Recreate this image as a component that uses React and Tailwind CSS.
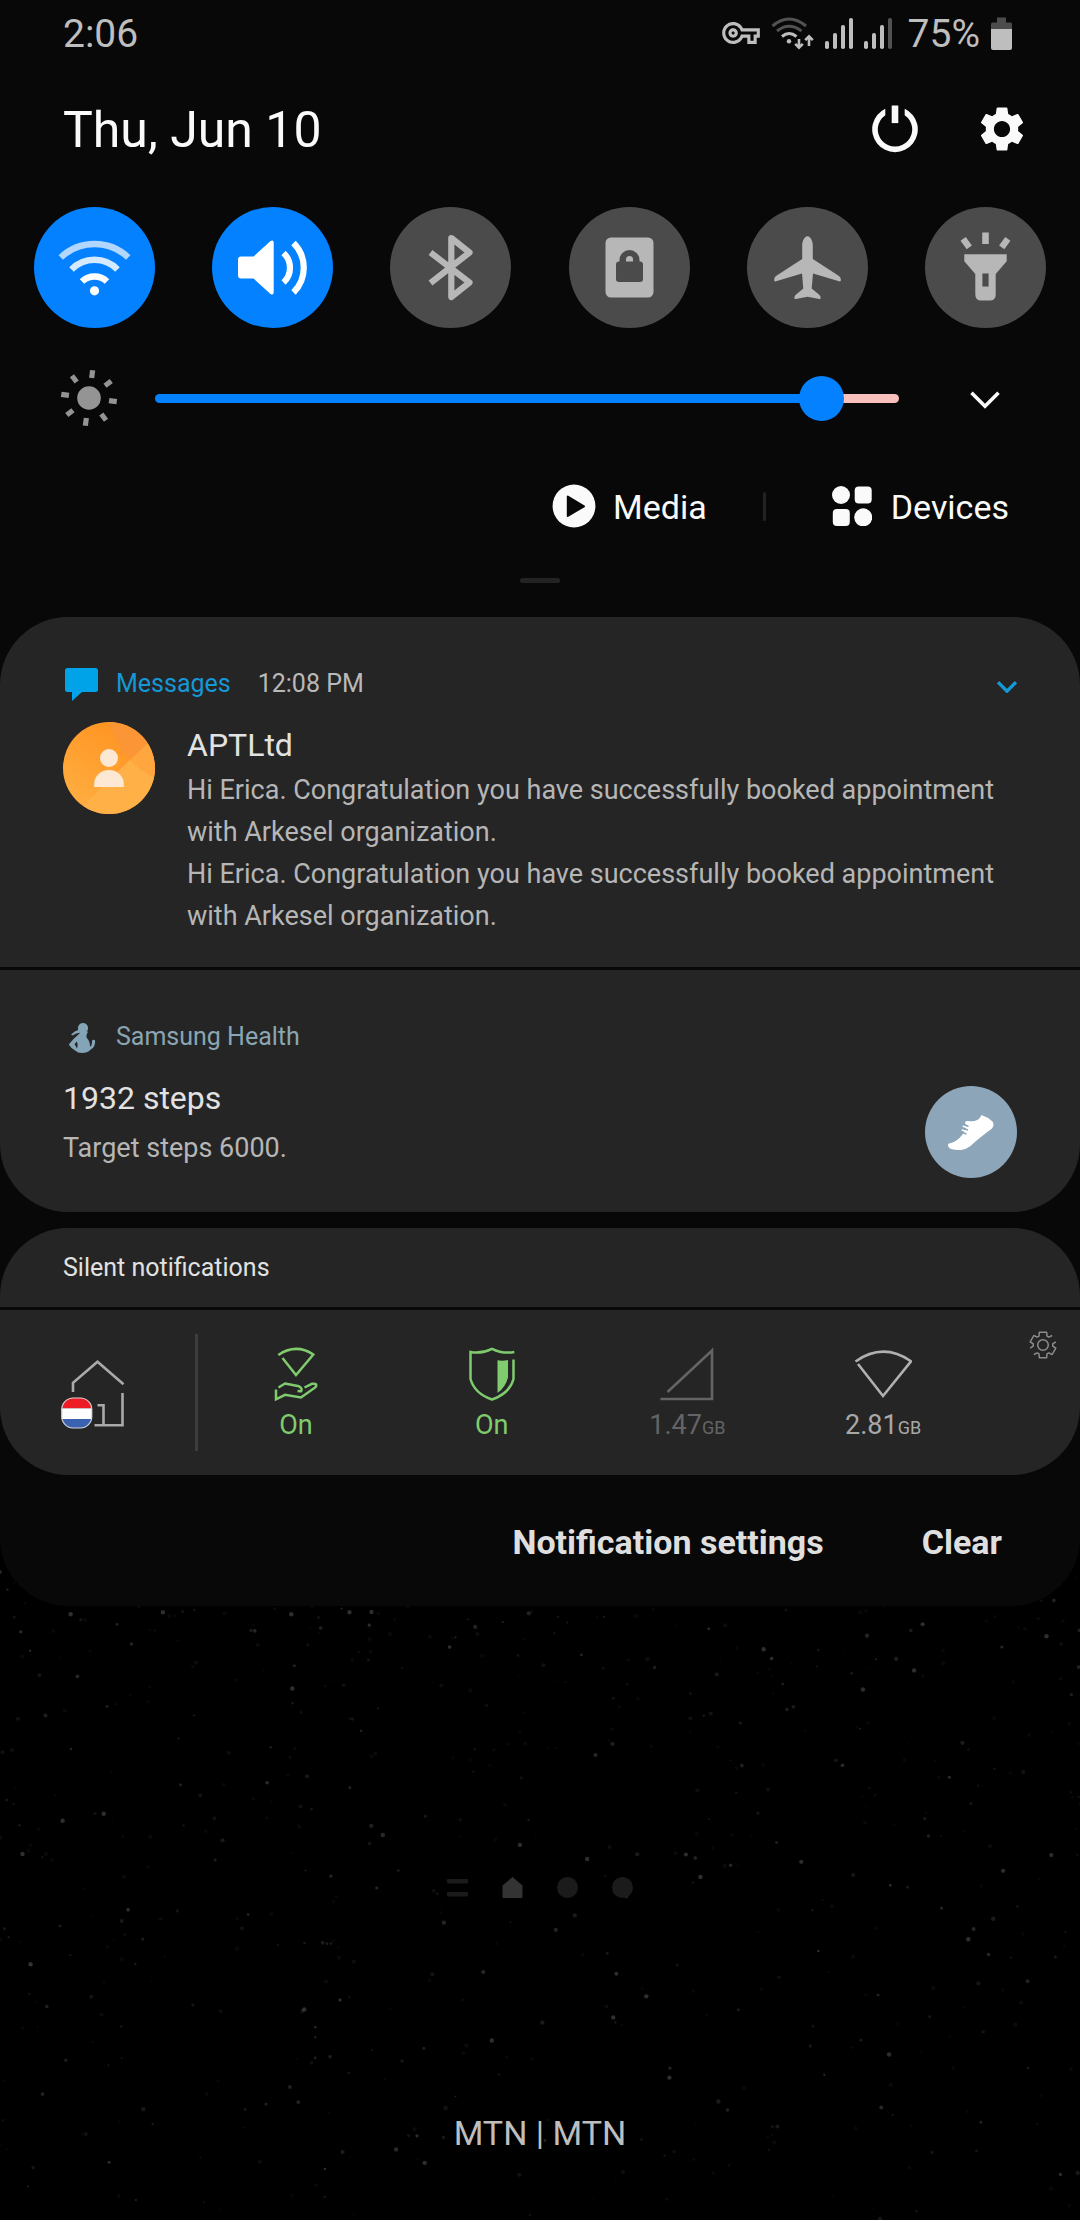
import React, { useState } from "react";
import { MdOutlineVpnKey, MdSettings } from "react-icons/md";

/* ---------- status bar icons ---------- */

function WifiStatusIcon() {
  return (
    <svg viewBox="770 13 44 34" className="h-[34px] w-[44px]" fill="none" stroke="#bebebe" strokeWidth="3">
      <path d="M771.5 23Q788 9 805 23" stroke="#525252" />
      <path d="M776 28Q788 18.5 800.5 28" stroke="#525252" />
      <path d="M781 33.5Q788 27.5 795.5 33.5" />
      <circle cx="788" cy="38.3" r="2.2" fill="#bebebe" stroke="none" />
      <path d="M798 36V44M794.2 40.8L798 44.6L801.8 40.8" strokeWidth="2.6" />
      <path d="M808 43V34M804.2 37.2L808 33.4L811.8 37.2" strokeWidth="2.6" />
    </svg>
  );
}

function SignalIcon({ level }) {
  const tops = [39, 31, 23, 16];
  return (
    <svg viewBox="0 15 28 32" className="h-[32px] w-[28px]">
      {tops.map((top, i) => (
        <rect key={top} x={i * 8} y={top} width="4" height={47 - top} rx="1.8" fill={i < level ? "#bebebe" : "#525252"} />
      ))}
    </svg>
  );
}

function BatteryIcon() {
  return (
    <svg viewBox="0 0 21 33" className="h-[33px] w-[21px]">
      <path d="M6 0.5h9v5h4.5q1.5 0 1.5 1.5v5H0V7q0-1.5 1.5-1.5H6z" fill="#4c4c4c" />
      <path d="M0 12h21v19q0 2-2 2H2q-2 0-2-2z" fill="#bebebe" />
    </svg>
  );
}

/* ---------- quick settings icons, drawn in a 121 x 121 tile ---------- */

function WifiIcon() {
  return (
    <g fill="none" stroke="#fff" strokeWidth="6.4">
      <path d="M26.8 50.5A49 49 0 0 1 94.2 50.5" stroke="#b1d7ff" />
      <path d="M37.5 62.5A32 32 0 0 1 83.5 62.5" stroke="#d5eaff" />
      <path d="M48 74.5A18 18 0 0 1 73 74.5" />
      <circle cx="60.5" cy="83.8" r="4.6" fill="#fff" stroke="none" />
    </g>
  );
}

function SoundIcon() {
  return (
    <g>
      <path d="M29 49.5h12.5L58.5 34q3.2-1.5 3.2 1.5v50q0 3-3.2 1.5L41.5 71.5H29q-3 0-3-3v-16q0-3 3-3z" fill="#fff" />
      <path d="M71.5 46A20 20 0 0 1 71.5 75.5M81.5 36A35 35 0 0 1 81.5 85.5" fill="none" stroke="#fff" strokeWidth="6.2" />
    </g>
  );
}

function BluetoothIcon() {
  return (
    <path d="M40.5 45.5L79.5 75.5L61.3 90V31L79.5 45.5L40.5 76" fill="none" stroke="#b7b7b7" strokeWidth="6.2" strokeLinejoin="round" />
  );
}

function LockIcon() {
  return (
    <g>
      <rect x="36.5" y="30.5" width="48" height="60" rx="5.5" fill="#b7b7b7" />
      <path d="M50.5 54.5V53a10 10 0 0 1 20 0v1.500h.5q3 0 3 3V72q0 3-3 3H50q-3 0-3-3V57.500q0-3 3-3z" fill="#4b4b4b" />
      <path d="M57 54.500V52.500a3.500 3.500 0 0 1 7 0v2z" fill="#b7b7b7" />
    </g>
  );
}

function AirplaneIcon() {
  return (
    <path
      d="M60.500 29.200c3.400 0 5.300 5.500 5.300 9.300v13.500L92 69q1.800 1.300 1.800 3.300v1.500q-.5.900-1.800.5L66 66.500 64.700 81.500 72.500 88q1.200 1.300 1.200 3.300-.4.900-1.500.6L60.500 89.700 48.800 91.900q-1.100.3-1.500-.6 0-2 1.200-3.300L56.300 81.500 55 66.500 29 74.300q-1.300.4-1.800-.5v-1.500q0-2 1.800-3.300L55.200 52V38.500c0-3.800 1.900-9.300 5.300-9.300z"
      fill="#b7b7b7"
    />
  );
}

function FlashlightIcon() {
  return (
    <g fill="#b7b7b7">
      <rect x="57.200" y="25.500" width="6.600" height="11.500" />
      <rect x="38" y="31" width="6.400" height="10.500" transform="rotate(-36 41.200 36.200)" />
      <rect x="76.600" y="31" width="6.400" height="10.500" transform="rotate(36 79.800 36.200)" />
      <path fillRule="evenodd" d="M39.300 47.200h42.400v7L70.700 67v20.500q0 6-6 6h-8.400q-6 0-6-6V67l-11-12.800zM57.400 66.500v13h6.200v-13z" />
    </g>
  );
}

const TILES = [
  { name: "Wi-Fi", on: true, Icon: WifiIcon },
  { name: "Sound", on: true, Icon: SoundIcon },
  { name: "Bluetooth", on: false, Icon: BluetoothIcon },
  { name: "Screen rotation lock", on: false, Icon: LockIcon },
  { name: "Airplane mode", on: false, Icon: AirplaneIcon },
  { name: "Flashlight", on: false, Icon: FlashlightIcon },
];

function PowerIcon() {
  return (
    <svg viewBox="-24 -25 48 50" className="h-[50px] w-[48px]" fill="#fafafa">
      <path d="M-9.700-20.300A22.800 22.800 0 1 0 9.700-20.300V-13.800A17.200 17.200 0 1 1-9.700-13.800z" />
      <rect x="-3.300" y="-23.500" width="6.600" height="17.600" />
    </svg>
  );
}

function SunIcon() {
  return (
    <svg viewBox="-30 -30 60 60" className="h-[60px] w-[60px]" fill="#949494">
      <circle r="11.800" />
      {[0, 1, 2, 3, 4, 5, 6, 7].map((i) => (
        <rect key={i} x="-2.600" y="-28" width="5.200" height="7.800" transform={`rotate(${7.5 + i * 45})`} />
      ))}
    </svg>
  );
}

function MediaIcon() {
  return (
    <svg viewBox="-22 -22 44 44" className="h-[44px] w-[44px]">
      <circle r="21.400" fill="#fafafa" />
      <path d="M-6.200-9.500L10 0.300L-6.200 10z" fill="#080808" stroke="#080808" strokeWidth="2" strokeLinejoin="round" />
    </svg>
  );
}

function DevicesIcon() {
  return (
    <svg viewBox="0 0 40 40" className="h-[40px] w-[40px]" fill="#fafafa">
      <circle cx="9" cy="9" r="9" />
      <rect x="22.700" y="0.500" width="17" height="17" rx="4" />
      <rect x="0.800" y="23" width="17" height="17" rx="4" />
      <circle cx="31.200" cy="31.300" r="9" />
    </svg>
  );
}

/* ---------- notification icons ---------- */

function MessageIcon() {
  return (
    <svg viewBox="65 667 33 33" className="h-[33px] w-[33px]" fill="#00a2e8">
      <path d="M67.500 667h28q2.500 0 2.500 2.500v19q0 2.500-2.500 2.500H82l-10 9v-9h-4.500q-2.500 0-2.500-2.500v-19q0-2.500 2.500-2.500z" />
    </svg>
  );
}

function ContactAvatar() {
  return (
    <svg viewBox="0 0 92 92" className="h-[92px] w-[92px] shrink-0 rounded-full">
      <defs>
        <linearGradient id="avatar" x1="0.700" y1="0" x2="0.200" y2="0.800">
          <stop offset="0.100" stopColor="#ff9422" />
          <stop offset="1" stopColor="#ffab3d" />
        </linearGradient>
      </defs>
      <rect width="92" height="92" fill="url(#avatar)" />
      <path d="M46 0Q53 24 67 38L92 14V0z" fill="#fb9535" />
      <path d="M67 38L92 14V56Q78 49 67 38z" fill="#ffa63f" />
      <path d="M67 38Q78 49 92 56V92H14L23 81z" fill="#ffb047" />
      <circle cx="46" cy="36" r="9" fill="#fde9d3" />
      <path d="M31.200 65v-3a14.800 14 0 0 1 29.600 0v3z" fill="#fde9d3" />
    </svg>
  );
}

function HealthIcon() {
  return (
    <svg viewBox="65 1019 33 33" className="h-[33px] w-[33px]" fill="#83a5b7">
      <circle cx="83" cy="1026" r="5.100" />
      <path d="M71 1032.500Q75 1028.300 79.500 1027.500L80 1030.800Q76 1031 72.500 1033.500z" />
      <path
        fillRule="evenodd"
        d="M80.500 1029L88 1029.500Q86 1033 86.500 1035.500Q90.500 1040 90 1044.800Q92.200 1043.500 92 1039Q93 1037 95 1038.300Q96 1044.500 90.500 1047.800Q87.500 1051 82 1051Q77.500 1051 75.500 1048.800Q71 1046.500 68.800 1042.500Q74 1036 79.500 1031.500zM74.500 1042L77 1046.500Q78.500 1043.500 77 1039.500z"
      />
    </svg>
  );
}

function ShoeIcon() {
  return (
    <svg viewBox="925 1086 92 92" className="h-[92px] w-[92px]">
      <path
        fill="#fff"
        d="M982 1115.200Q988.500 1117.300 992.500 1121.500Q994.800 1125 992 1128.500Q979 1138 970.500 1146Q966 1149.500 961 1150Q955.500 1150.300 951 1149Q947.200 1147.300 948.300 1143.800Q957 1142 962.500 1134.500L967.500 1126L965 1123.500Q964.800 1120.500 968 1121Q977.500 1122.500 980.700 1116.500Q981 1115 982 1115.200z"
      />
      <path d="M963 1124.300L968.500 1126.500M962.500 1128L968 1130M961 1132L966.500 1134" stroke="#8ca5b9" strokeWidth="1.500" />
      <path d="M963.300 1126.300L968 1128M962.300 1130L967 1132" stroke="#fff" strokeWidth="1.600" strokeLinecap="round" />
    </svg>
  );
}

function Chevron({ className, color, width }) {
  return (
    <svg viewBox="0 0 30 18" className={className} fill="none" stroke={color} strokeWidth={width}>
      <path d="M1.500 1.800L15 15.300L28.500 1.800" />
    </svg>
  );
}

/* ---------- VPN widget icons ---------- */

function HomeIcon() {
  return (
    <svg viewBox="60 1359 66 72" className="h-[72px] w-[66px]" fill="none" stroke="#aaaaaa" strokeWidth="2.600">
      <path d="M73 1392V1382.800L97.500 1361.800L123.500 1384.300" />
      <path d="M122.500 1393V1425.300H94.500" />
      <path d="M97.500 1405.200H103.500V1424" />
      <clipPath id="flag">
        <rect x="61.500" y="1397.800" width="30.500" height="30.500" rx="11.500" />
      </clipPath>
      <g clipPath="url(#flag)" stroke="none">
        <rect x="61" y="1397" width="32" height="11.300" fill="#ee1c25" />
        <rect x="61" y="1408.300" width="32" height="10.700" fill="#fff" />
        <rect x="61" y="1419" width="32" height="11" fill="#3a62b0" />
      </g>
      <rect x="61.800" y="1398" width="30" height="30" rx="11.500" stroke="#cfcfcf" strokeWidth="1.200" />
    </svg>
  );
}

function SharedWifiIcon() {
  return (
    <svg viewBox="268.500 1347 54 54" className="h-[54px] w-[54px]" fill="none" stroke="#7fcb6d" strokeWidth="2.500">
      <path d="M277.800 1355Q295.500 1343 312.800 1354.500L295.500 1375L282 1358" />
      <path d="M278 1387.500L284.500 1383.500L298.500 1386.300Q302.500 1388.500 300.500 1391.300L297 1391" strokeLinejoin="round" />
      <path d="M304 1387.500L311.500 1383.800Q317.500 1383 315 1387.200L300.500 1397.500L284.500 1394.800L275.500 1399.300V1389.500" />
    </svg>
  );
}

function ShieldIcon() {
  return (
    <svg viewBox="464.500 1347 54 54" className="h-[54px] w-[54px]" fill="none" stroke="#7fcb6d" strokeWidth="2.500">
      <path d="M513.800 1352Q502 1354 491.500 1348.800Q481 1354 470 1352V1379Q474 1393.500 491.500 1399.500Q509 1393.500 513 1379V1359.500" />
      <path d="M497 1360.300Q502 1361.300 507.500 1360V1377.500Q505 1387.500 497 1393z" fill="#7fcb6d" stroke="none" />
    </svg>
  );
}

function CellularIcon() {
  return (
    <svg viewBox="660.500 1347 54 54" className="h-[54px] w-[54px]" fill="none" stroke="#646464" strokeWidth="2.600">
      <path d="M668 1392L712.500 1350.500V1399H661" />
    </svg>
  );
}

function WifiFanIcon() {
  return (
    <svg viewBox="854 1347 58 54" className="h-[54px] w-[58px]" fill="none" stroke="#b0b0b0" strokeWidth="2.600">
      <path d="M855.500 1361.500Q883 1342 911 1361.300L883 1396L858 1364" />
    </svg>
  );
}

/* A six-tooth cog traced as two open strokes. */
function cogPoints(from, to) {
  const tooth = [
    [-24, 9.8],
    [-16, 13.2],
    [16, 13.2],
    [24, 9.8],
  ];
  const points = [];
  for (let i = from; i <= to; i += 1) {
    const [offset, radius] = tooth[i % 4];
    const a = ((offset + 60 * Math.floor(i / 4)) * Math.PI) / 180;
    points.push(`${(radius * Math.sin(a)).toFixed(2)},${(-radius * Math.cos(a)).toFixed(2)}`);
  }
  return points.join(" ");
}

function CogOutlineIcon() {
  return (
    <svg viewBox="-14 -14 28 28" className="h-[28px] w-[28px]" fill="none" stroke="#8c8c8c" strokeWidth="1.500" strokeLinejoin="round">
      <polyline points={cogPoints(6, 17)} />
      <polyline points={cogPoints(18, 29)} />
      <circle r="5.300" />
    </svg>
  );
}

const METRICS = [
  { Icon: SharedWifiIcon, value: "On", unit: "", color: "text-[#7fcb6d]" },
  { Icon: ShieldIcon, value: "On", unit: "", color: "text-[#7fcb6d]" },
  { Icon: CellularIcon, value: "1.47", unit: "GB", color: "text-[#646464]" },
  { Icon: WifiFanIcon, value: "2.81", unit: "GB", color: "text-[#a8a8a8]" },
];

/* ---------- wallpaper ---------- */

function makeStars(count) {
  let seed = 20210610;
  const next = () => {
    seed = (seed * 1664525 + 1013904223) % 4294967296;
    return seed / 4294967296;
  };
  return Array.from({ length: count }, () => ({
    x: next() * 1080,
    y: Math.pow(next(), 1.9) * 680,
    r: 0.9 + next() * 1.3,
    o: 0.03 + Math.pow(next(), 3) * 0.15,
  }));
}

const STARS = makeStars(800);
const BRIGHT_STARS = [
  [587, 320], [24, 315], [64, 282], [105, 275], [862, 151], [913, 132], [763, 111], [1045, 98],
  [350, 74], [164, 74], [292, 76], [520, 306], [669, 538], [646, 457], [613, 478], [492, 501],
  [32, 425], [305, 470], [967, 400], [888, 515], [425, 623], [700, 338], [72, 76], [293, 150],
];

function Stars() {
  return (
    <svg aria-hidden="true" viewBox="0 0 1080 680" preserveAspectRatio="xMidYMin slice" className="absolute inset-x-0 -top-[68px] h-[682px] w-full" fill="#fff">
      {STARS.map((s, i) => (
        <circle key={i} cx={s.x} cy={s.y} r={s.r} opacity={s.o} />
      ))}
      {BRIGHT_STARS.map(([x, y]) => (
        <circle key={`${x}-${y}`} cx={x} cy={y} r="2.200" opacity="0.180" />
      ))}
    </svg>
  );
}

/* ---------- sections ---------- */

function StatusBar() {
  return (
    <div className="flex h-[66px] items-center justify-between pr-[68px] pl-[63px] text-[39px] leading-[48px] text-[#bebebe]">
      <time className="pt-[2px]">2:06</time>
      <div className="flex items-center">
        <MdOutlineVpnKey viewBox="0 5 24 14" className="mr-[11px] h-[22px] w-[38px]" />
        <div className="mr-[10px]">
          <WifiStatusIcon />
        </div>
        <div className="mr-[11px]">
          <SignalIcon level={4} />
        </div>
        <SignalIcon level={3} />
        <span className="mr-[11px] ml-[16px] pt-[2px]">75%</span>
        <BatteryIcon />
      </div>
    </div>
  );
}

function QuickSettings() {
  const [brightness, setBrightness] = useState(235);
  return (
    <section>
      <div className="flex h-[126px] items-center justify-between pr-[51px] pl-[63px]">
        <h1 className="pt-[2px] text-[50px] leading-[60px] text-[#fafafa]">Thu, Jun 10</h1>
        <div className="flex items-center gap-[56px] text-[#fafafa]">
          <button type="button" aria-label="Power">
            <PowerIcon />
          </button>
          <button type="button" aria-label="Settings">
            <MdSettings className="h-[54px] w-[54px]" />
          </button>
        </div>
      </div>

      <div className="flex justify-between px-[34px] pt-[15px]">
        {TILES.map(({ name, on, Icon }) => (
          <button
            key={name}
            type="button"
            aria-label={name}
            aria-pressed={on}
            className={on ? "size-[121px] rounded-full bg-[#0381fe]" : "size-[121px] rounded-full bg-[#4b4b4b]"}
          >
            <svg viewBox="0 0 121 121" className="size-full">
              <Icon />
            </svg>
          </button>
        ))}
      </div>

      <div className="mt-[40px] flex h-[60px] items-center pr-[80px] pl-[59px]">
        <SunIcon />
        <input
          type="range"
          aria-label="Brightness"
          min="0"
          max="255"
          value={brightness}
          onChange={(e) => setBrightness(Number(e.target.value))}
          style={{ "--level": `${(brightness / 255) * 100}%` }}
          className="mr-[71px] ml-[36px] h-[46px] min-w-0 flex-1 appearance-none bg-transparent [&::-webkit-slider-runnable-track]:h-[9px] [&::-webkit-slider-runnable-track]:rounded-full [&::-webkit-slider-runnable-track]:bg-[linear-gradient(to_right,#0381fe_var(--level),#f8c0bc_var(--level))] [&::-webkit-slider-thumb]:-mt-[18px] [&::-webkit-slider-thumb]:size-[45px] [&::-webkit-slider-thumb]:appearance-none [&::-webkit-slider-thumb]:rounded-full [&::-webkit-slider-thumb]:bg-[#0381fe]"
        />
        <button type="button" aria-label="Expand quick settings" className="pt-[4px]">
          <Chevron className="h-[18px] w-[30px]" color="#fafafa" width="3.600" />
        </button>
      </div>

      <div className="mt-[48px] flex h-[60px] items-center justify-end pr-[71px] text-[34px] leading-[40px] text-[#fafafa]">
        <button type="button" className="flex items-center gap-[17px]">
          <MediaIcon />
          <span className="pt-[2px]">Media</span>
        </button>
        <span className="mr-[66px] ml-[56px] h-[29px] w-[3px] rounded-full bg-[#232323]" />
        <button type="button" className="flex items-center gap-[19px]">
          <DevicesIcon />
          <span className="pt-[2px]">Devices</span>
        </button>
      </div>

      <div className="mx-auto mt-[42px] h-[5px] w-[40px] rounded-full bg-[#232323]" />
    </section>
  );
}

function Notifications() {
  return (
    <section className="mt-[34px] flex flex-col gap-[3px] overflow-hidden rounded-[68px]">
      <article className="bg-[#252525] pt-[47px] pr-[63px] pb-[30px] pl-[63px]">
        <header className="flex h-[40px] items-center text-[25px] leading-[32px]">
          <div className="mr-[18px] ml-[2px]">
            <MessageIcon />
          </div>
          <span className="text-[#1598d6]">Messages</span>
          <time className="ml-[27px] text-[#b9b9b9]">12:08 PM</time>
          <button type="button" aria-label="Expand message" className="ml-auto pt-[5px]">
            <Chevron className="h-[12px] w-[20px]" color="#1598d6" width="5" />
          </button>
        </header>
        <div className="mt-[18px] flex gap-[32px]">
          <ContactAvatar />
          <div className="min-w-0 flex-1">
            <h2 className="text-[32px] leading-[46px] text-[#e2e2e2]">APTLtd</h2>
            <div className="mt-px text-[27px] leading-[42px] text-[#b6b6b6]">
              <p>Hi Erica. Congratulation you have successfully booked appointment with Arkesel organization.</p>
              <p>Hi Erica. Congratulation you have successfully booked appointment with Arkesel organization.</p>
            </div>
          </div>
        </div>
      </article>

      <article className="bg-[#252525] pt-[47px] pr-[63px] pb-[34px] pl-[63px]">
        <header className="flex h-[40px] items-center text-[25px] leading-[32px] text-[#8aa5b3]">
          <div className="mr-[18px] ml-[2px]">
            <HealthIcon />
          </div>
          Samsung Health
        </header>
        <div className="mt-[18px] flex items-start justify-between">
          <div>
            <h2 className="text-[32px] leading-[46px] text-[#e2e2e2]">1932 steps</h2>
            <p className="mt-[6px] text-[27px] leading-[42px] text-[#b6b6b6]">Target steps 6000.</p>
          </div>
          <div className="mt-[11px] size-[92px] rounded-full bg-[#8ca5b9]">
            <ShoeIcon />
          </div>
        </div>
      </article>
    </section>
  );
}

function SilentNotifications() {
  return (
    <section className="mt-[16px] flex flex-col gap-[3px] overflow-hidden rounded-[68px]">
      <h2 className="flex h-[79px] items-center bg-[#252525] px-[63px] text-[25px] leading-[32px] text-[#e2e2e2]">
        Silent notifications
      </h2>
      <div className="flex h-[165px] bg-[#252525]">
        <div className="flex w-[195px] items-center pt-[4px] pl-[60px]">
          <HomeIcon />
        </div>
        <span className="my-[24px] w-[3px] bg-[#3d3d3d]" />
        <ul className="flex flex-1">
          {METRICS.map(({ Icon, value, unit, color }, i) => (
            <li key={i} className={`flex flex-1 flex-col items-center pt-[37px] text-[27px] leading-[32px] ${color}`}>
              <Icon />
              <span className="mt-[8px]">
                {value}
                {unit && <span className="text-[18px]">{unit}</span>}
              </span>
            </li>
          ))}
        </ul>
        <div className="flex w-[99px] items-start justify-end pt-[21px] pr-[23px]">
          <button type="button" aria-label="VPN widget settings">
            <CogOutlineIcon />
          </button>
        </div>
      </div>
    </section>
  );
}

export default function App() {
  return (
    <div className="isolate flex min-h-screen flex-col overflow-hidden bg-black font-[Roboto,'Noto_Sans',sans-serif]">
      <div className="relative z-10 rounded-b-[68px] bg-[#080808]">
        <StatusBar />
        <QuickSettings />
        <Notifications />
        <SilentNotifications />
        <footer className="flex h-[131px] items-center justify-end gap-[98px] pt-[2px] pr-[78px] text-[34px] leading-[40px] font-bold text-[#dfdfdf]">
          <button type="button">Notification settings</button>
          <button type="button">Clear</button>
        </footer>
      </div>

      <main className="relative flex flex-1 flex-col items-center pt-[271px] pb-[67px]">
        <Stars />
        <nav aria-label="Home screen pages" className="relative flex items-center gap-[34px]">
          <svg viewBox="0 0 21 21" className="size-[21px]" fill="#1b1b1b">
            <rect y="2" width="21" height="4.500" rx="1" />
            <rect y="15" width="21" height="4.500" rx="1" />
          </svg>
          <svg viewBox="0 0 21 21" className="size-[21px]" fill="#333333">
            <path d="M10.500 0L20.500 8.500V20q0 1-1 1H1.500q-1 0-1-1V8.500z" />
          </svg>
          <span className="size-[21px] rounded-full bg-[#1b1b1b]" />
          <span className="size-[21px] rounded-full bg-[#1b1b1b]" />
        </nav>
        <p className="relative mt-auto text-[34px] leading-[40px] text-[#bebebe]">MTN | MTN</p>
      </main>
    </div>
  );
}
